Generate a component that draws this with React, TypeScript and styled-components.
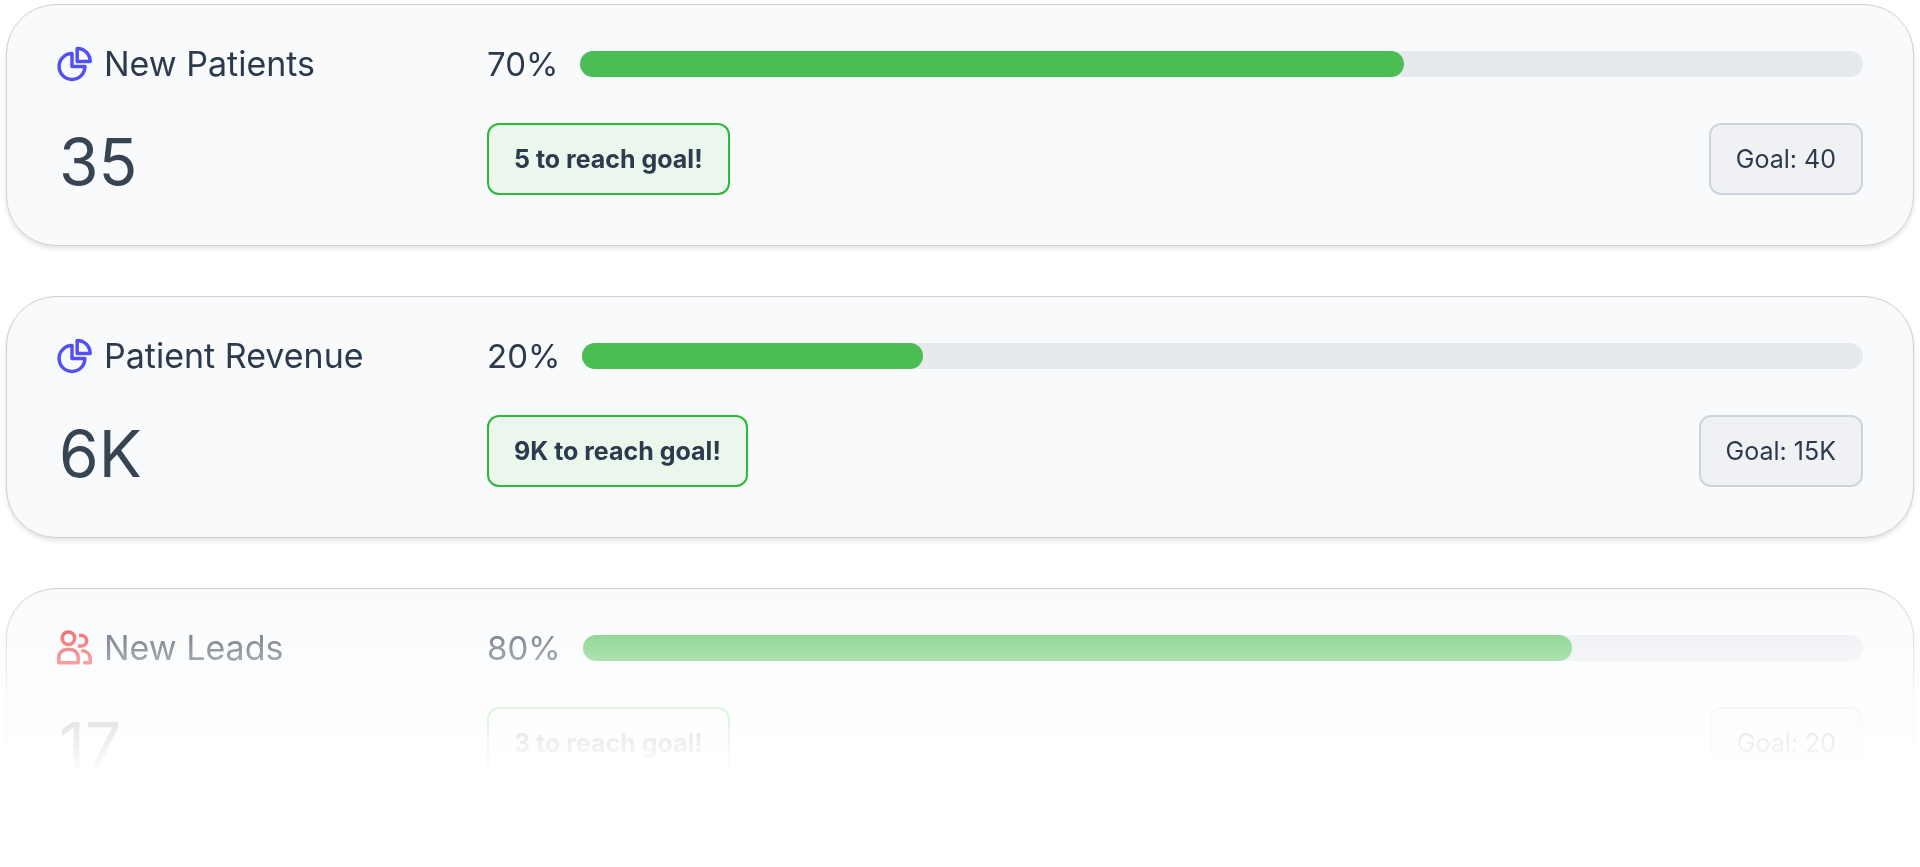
import React from "react";
import styled, { createGlobalStyle } from "styled-components";

const GlobalStyle = createGlobalStyle`
  *, *::before, *::after { box-sizing: border-box; }
  body {
    margin: 0;
    background: #ffffff;
    color: #2b3a4c;
    font-family: Inter, "Liberation Sans", sans-serif;
  }
`;

/* The list dissolves into the page behind its third card. */
const GoalList = styled.main`
  display: flex;
  flex-direction: column;
  gap: 50px;
  padding: 4px 6px 36px;
  mask-image: linear-gradient(
    to bottom,
    #000 590px,
    rgba(0, 0, 0, 0.61) 634px,
    rgba(0, 0, 0, 0.45) 660px,
    rgba(0, 0, 0, 0.17) 708px,
    rgba(0, 0, 0, 0.03) 764px,
    transparent 784px
  );
`;

const Card = styled.article`
  display: grid;
  grid-template-columns: minmax(0, 430fr) minmax(0, 1376fr);
  row-gap: 37px;
  padding: 37px 50px 44px;
  border: 1px solid #cdcfd2;
  border-radius: 50px;
  background: #f9fafc;
  box-shadow: 0 3px 4px rgba(0, 0, 0, 0.1);
`;

const Title = styled.h2`
  display: flex;
  align-items: center;
  gap: 11px;
  margin: 0;
  font-size: 34px;
  font-weight: 400;
  line-height: 44px;
  white-space: nowrap;
`;

const Icon = styled.svg<{ $color: string }>`
  flex: none;
  width: 36px;
  height: 36px;
  fill: none;
  stroke: ${(p) => p.$color};
  stroke-width: 3.5;
  stroke-linejoin: round;
`;

const Progress = styled.div`
  display: flex;
  align-items: center;
  gap: 22px;
`;

const Percent = styled.span`
  font-size: 33px;
  line-height: 44px;
`;

const Track = styled.div`
  flex: 1;
  height: 26px;
  border-radius: 13px;
  background: #e6e9ee;
`;

const Fill = styled.div`
  height: 100%;
  border-radius: 13px;
  background: #4bbe53;
`;

const Value = styled.p`
  margin: 0;
  padding-left: 2px;
  font-size: 64px;
  font-weight: 400;
  line-height: 78px;
  color: #364454;
`;

const Targets = styled.div`
  display: flex;
  align-items: flex-start;
  justify-content: space-between;
`;

const Pill = styled.span<{ $reach?: boolean }>`
  padding: 0 25px;
  border: 2px solid ${(p) => (p.$reach ? "#2db83b" : "#ccd5de")};
  border-radius: 12px;
  background: ${(p) => (p.$reach ? "#ebf6ec" : "#f0f1f5")};
  font-size: 25px;
  font-weight: ${(p) => (p.$reach ? 700 : 400)};
  line-height: 68px;
  white-space: nowrap;
`;

const PieIcon = () => (
  <Icon viewBox="0 0 36 36" $color="#5350f5" aria-hidden="true">
    <path d="M15 7.6V20.5H27.9A12.9 12.9 0 1 1 15 7.6Z" />
    <path d="M20.2 2.5V15.5H33.2A13 13 0 0 0 20.2 2.5Z" />
  </Icon>
);

const PeopleIcon = () => (
  <Icon viewBox="0 0 36 36" $color="#ec2226" aria-hidden="true">
    <circle cx="11.4" cy="8.2" r="6.3" />
    <path d="M1.8 32.8V27.5A8 8 0 0 1 9.8 19.5H13.2A8 8 0 0 1 21.2 27.5V32.8Z" />
    <path d="M22 5.4H24.4A5.3 5.3 0 0 1 24.4 16H21" />
    <path d="M24.4 20.6C30 21 33.2 24.4 33.2 28.6V32.8H26.2" />
  </Icon>
);

interface Goal {
  title: string;
  icon: React.ReactNode;
  value: string;
  percent: string;
  fill: number;
  remaining: string;
  goal: string;
}

const goals: Goal[] = [
  { title: "New Patients", icon: <PieIcon />, value: "35", percent: "70%", fill: 64.2, remaining: "5", goal: "40" },
  { title: "Patient Revenue", icon: <PieIcon />, value: "6K", percent: "20%", fill: 26.6, remaining: "9K", goal: "15K" },
  { title: "New Leads", icon: <PeopleIcon />, value: "17", percent: "80%", fill: 77.3, remaining: "3", goal: "20" },
];

export default function App() {
  return (
    <>
      <GlobalStyle />
      <GoalList>
        {goals.map((g) => (
          <Card key={g.title}>
            <Title>
              {g.icon}
              {g.title}
            </Title>
            <Progress>
              <Percent>{g.percent}</Percent>
              <Track>
                <Fill style={{ width: `${g.fill}%` }} />
              </Track>
            </Progress>
            <Value>{g.value}</Value>
            <Targets>
              <Pill $reach>{g.remaining} to reach goal!</Pill>
              <Pill>Goal: {g.goal}</Pill>
            </Targets>
          </Card>
        ))}
      </GoalList>
    </>
  );
}
